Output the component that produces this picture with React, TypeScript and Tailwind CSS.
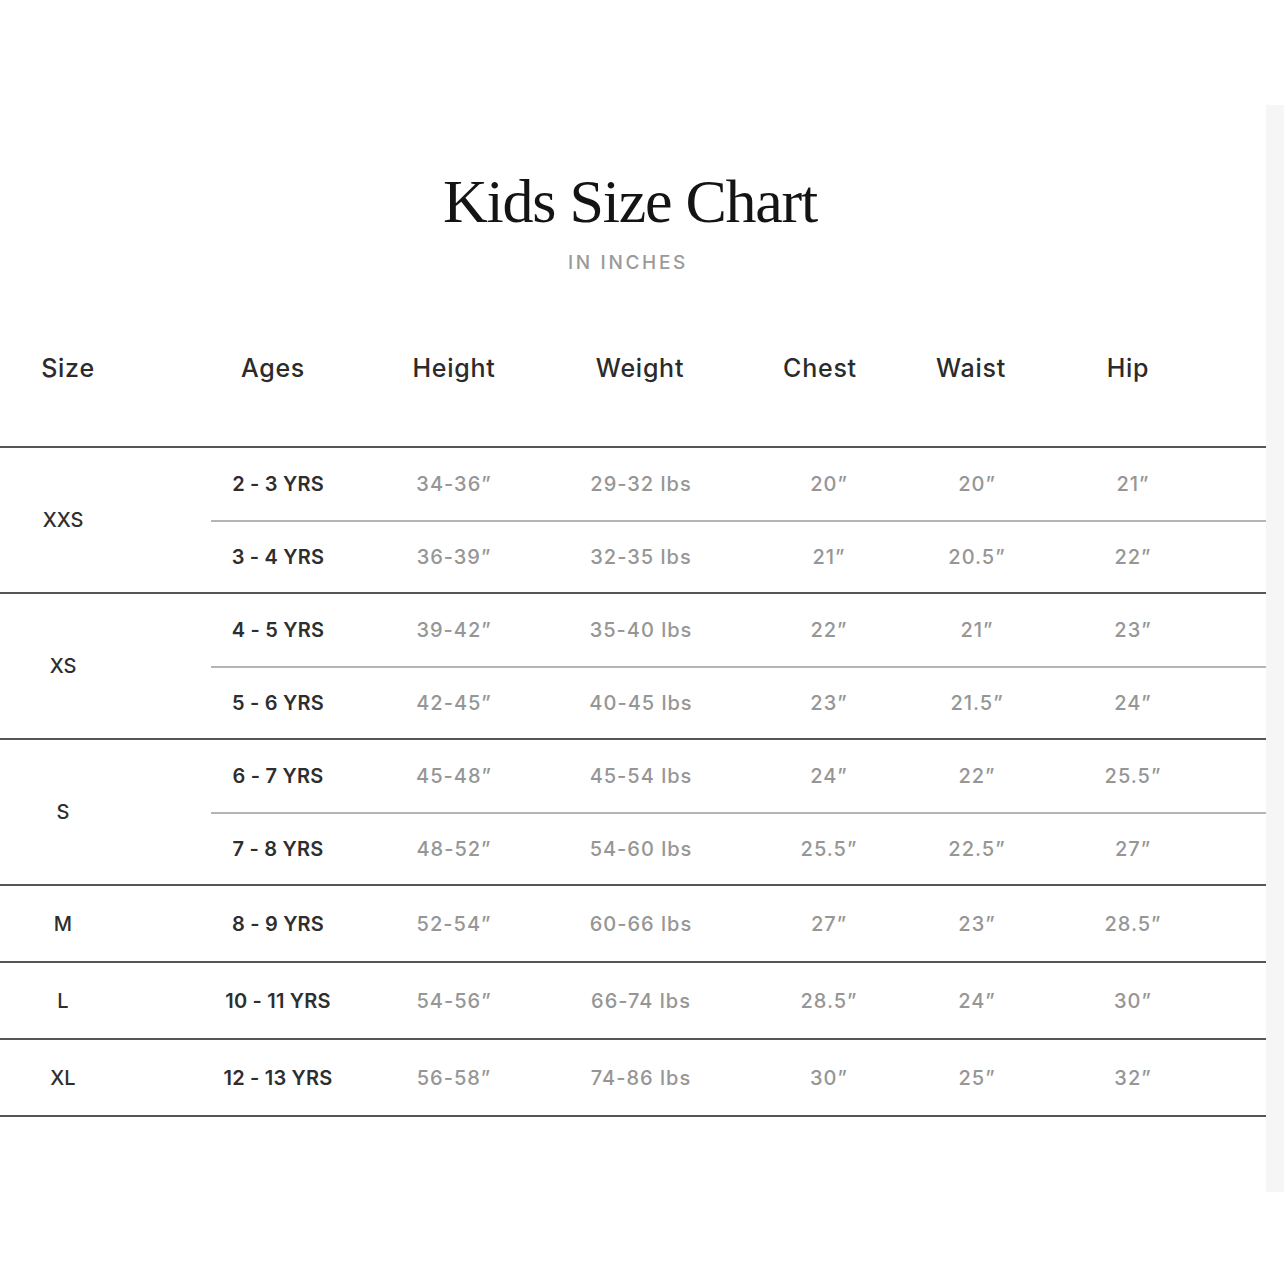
import React from "react";

type Sub = { age: string; h: string; w: string; c: string; wa: string; hip: string };
type Group = { size: string; rows: Sub[] };

const groups: Group[] = [
  {
    size: "XXS",
    rows: [
      { age: "2 - 3 YRS", h: "34-36”", w: "29-32 lbs", c: "20”", wa: "20”", hip: "21”" },
      { age: "3 - 4 YRS", h: "36-39”", w: "32-35 lbs", c: "21”", wa: "20.5”", hip: "22”" },
    ],
  },
  {
    size: "XS",
    rows: [
      { age: "4 - 5 YRS", h: "39-42”", w: "35-40 lbs", c: "22”", wa: "21”", hip: "23”" },
      { age: "5 - 6 YRS", h: "42-45”", w: "40-45 lbs", c: "23”", wa: "21.5”", hip: "24”" },
    ],
  },
  {
    size: "S",
    rows: [
      { age: "6 - 7 YRS", h: "45-48”", w: "45-54 lbs", c: "24”", wa: "22”", hip: "25.5”" },
      { age: "7 - 8 YRS", h: "48-52”", w: "54-60 lbs", c: "25.5”", wa: "22.5”", hip: "27”" },
    ],
  },
  { size: "M", rows: [{ age: "8 - 9 YRS", h: "52-54”", w: "60-66 lbs", c: "27”", wa: "23”", hip: "28.5”" }] },
  { size: "L", rows: [{ age: "10 - 11 YRS", h: "54-56”", w: "66-74 lbs", c: "28.5”", wa: "24”", hip: "30”" }] },
  { size: "XL", rows: [{ age: "12 - 13 YRS", h: "56-58”", w: "74-86 lbs", c: "30”", wa: "25”", hip: "32”" }] },
];

const Cell = ({ children, cls = "" }: { children: React.ReactNode; cls?: string }) => (
  <div className={`flex justify-center whitespace-nowrap ${cls}`}>{children}</div>
);

const val = "text-[20px] leading-[20px] font-medium text-[#969696] tracking-[0.05em]";

function SubRow({ r, hClass }: { r: Sub; hClass: string }) {
  return (
    <div className={`grid grid-cols-[134px_218px_156px_220px_76px_236px] items-center ${hClass}`}>
      <Cell cls="text-[20px] leading-[20px] font-semibold text-[#2e2e2e] tracking-[0.01em]">{r.age}</Cell>
      <Cell cls={val}>{r.h}</Cell>
      <Cell cls={val}>{r.w}</Cell>
      <Cell cls={val}>{r.c}</Cell>
      <Cell cls={val}>{r.wa}</Cell>
      <Cell cls={val}>{r.hip}</Cell>
    </div>
  );
}

export default function App() {
  return (
    <div className="w-[1284px] h-[1284px] bg-white flex" style={{ fontFamily: "Inter, 'Liberation Sans', sans-serif" }}>
      <div className="w-[1266px] flex flex-col">
        <div className="pt-[170px] pr-[6px] flex flex-col items-center">
          <h1
            className="text-[62px] leading-[62px] text-[#141414] tracking-[-0.02em] font-normal"
            style={{ fontFamily: "'Liberation Serif', 'Times New Roman', serif" }}
          >
            Kids Size Chart
          </h1>
          <div className="mt-[21px] pr-[4px] text-[19px] leading-[19px] tracking-[0.14em] text-[#9a9a9a] font-medium">
            IN INCHES
          </div>
        </div>

        <div className="mt-[66px] h-[60px] grid grid-cols-[136px_274px_88px_284px_76px_226px_88px] items-center text-[25px] leading-[25px] font-medium text-[#2b2b2b] tracking-[0.03em]">
          <Cell>Size</Cell>
          <Cell>Ages</Cell>
          <Cell>Height</Cell>
          <Cell>Weight</Cell>
          <Cell>Chest</Cell>
          <Cell>Waist</Cell>
          <Cell>Hip</Cell>
        </div>

        <div className="mt-[48px] h-[2px] bg-[#555]" />
        {groups.map((g) => (
          <React.Fragment key={g.size}>
            <div className="flex">
              <div className="w-[126px] flex items-center justify-center text-[20px] leading-[20px] font-medium text-[#2e2e2e]">
                {g.size}
              </div>
              <div className="w-[85px]" />
              <div className="flex-1 flex flex-col">
                {g.rows.length === 2 ? (
                  <>
                    <SubRow r={g.rows[0]} hClass="h-[72px]" />
                    <div className="h-[2px] bg-[#b4b4b4]" />
                    <SubRow r={g.rows[1]} hClass="h-[70px]" />
                  </>
                ) : (
                  <SubRow r={g.rows[0]} hClass="h-[75px]" />
                )}
              </div>
            </div>
            <div className="h-[2px] bg-[#555]" />
          </React.Fragment>
        ))}
      </div>
      <div className="mt-[105px] h-[1087px] w-[18px] bg-[#f6f6f6]" />
    </div>
  );
}
